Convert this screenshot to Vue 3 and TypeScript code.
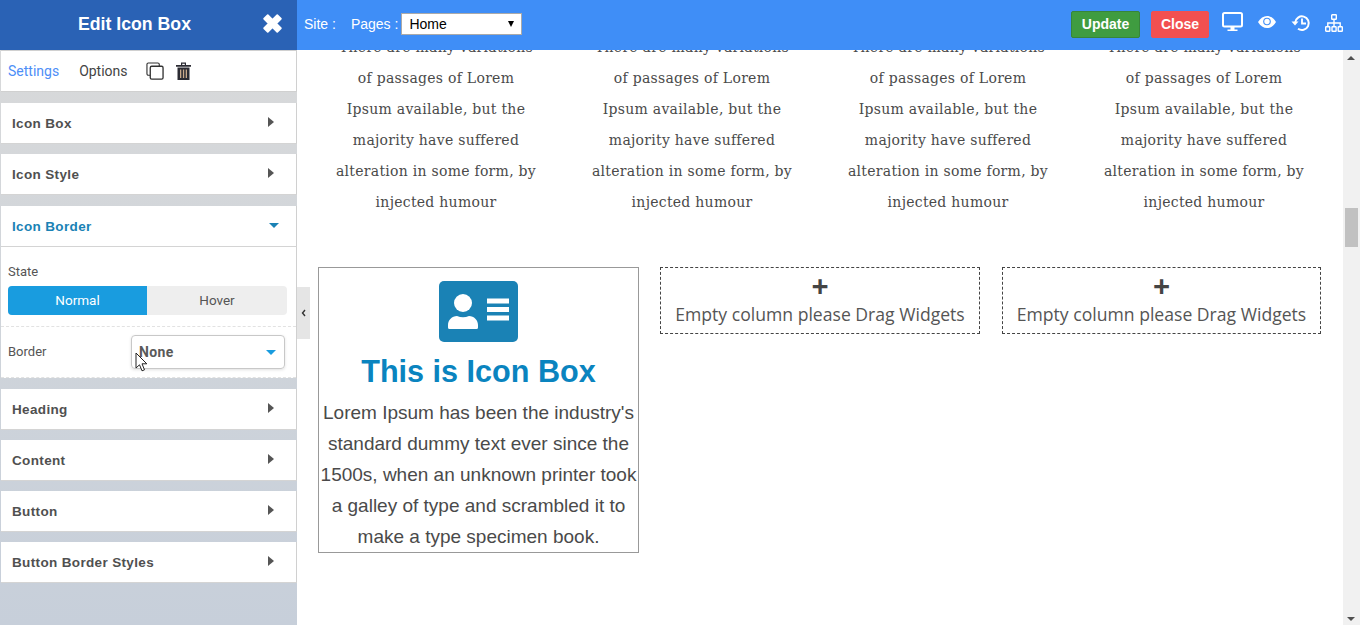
<script setup lang="ts">
const loremLines = [
  'There are many variations',
  'of passages of Lorem',
  'Ipsum available, but the',
  'majority have suffered',
  'alteration in some form, by',
  'injected humour'
]
const textColumns = [1, 2, 3, 4]
const boxLines = [
  "Lorem Ipsum has been the industry's",
  'standard dummy text ever since the',
  '1500s, when an unknown printer took',
  'a galley of type and scrambled it to',
  'make a type specimen book.'
]
const topRows = ['Icon Box', 'Icon Style']
const bottomRows = ['Heading', 'Content', 'Button', 'Button Border Styles']
</script>

<template>
  <div class="page">
    <header class="topbar">
      <div class="edit-title">
        <span class="edit-name">Edit Icon Box</span>
        <svg class="edit-close" width="19" height="19" viewBox="2 2 16 16">
          <path d="M3 6 6 3l4 4 4-4 3 3-4 4 4 4-3 3-4-4-4 4-3-3 4-4z" fill="#fff" stroke="#fff" stroke-width="1.5" stroke-linejoin="round" />
        </svg>
      </div>
      <div class="site-nav">
        <span class="site-label">Site :</span>
        <span class="pages-label">Pages :</span>
        <div class="select-wrap">
          <select class="page-select">
            <option>Home</option>
          </select>
          <span class="select-caret"></span>
        </div>
      </div>
      <div class="actions">
        <button class="btn btn-update">Update</button>
        <button class="btn btn-close">Close</button>
        <svg class="tool tool-monitor" width="21" height="20" viewBox="0 0 21 20">
          <rect x="1" y="1" width="19" height="13.5" rx="1.5" fill="none" stroke="#fff" stroke-width="2" />
          <path d="M8.5 15h4v2.5h-4zM5.5 17.5h10V19h-10z" fill="#fff" />
        </svg>
        <svg class="tool tool-eye" width="18" height="12" viewBox="0 0 18 12">
          <path d="M0 6C2.5 2 5.5 0 9 0s6.500 2 9 6c-2.500 4-5.500 6-9 6S2.500 10 0 6z" fill="#fff" />
          <circle cx="9" cy="5.500" r="3.800" fill="#3f8ef7" />
          <circle cx="9" cy="5.500" r="2.700" fill="#fff" />
        </svg>
        <svg class="tool tool-history" width="20" height="18" viewBox="0 0 20 18">
          <path d="M4.200 8.500A6.800 6.800 0 1 1 7 14.700" fill="none" stroke="#fff" stroke-width="2" />
          <path d="M0.500 7.500h7l-3.500 4z" fill="#fff" />
          <path d="M11 4.500v5h4" fill="none" stroke="#fff" stroke-width="1.800" />
        </svg>
        <svg class="tool tool-sitemap" width="18" height="18" viewBox="0 0 18 18">
          <g fill="none" stroke="#fff" stroke-width="1.400">
            <rect x="6.700" y="0.700" width="4.600" height="4.600" rx="0.600" />
            <rect x="0.700" y="12.700" width="4.100" height="4.600" rx="0.600" />
            <rect x="7" y="12.700" width="4.100" height="4.600" rx="0.600" />
            <rect x="13.200" y="12.700" width="4.100" height="4.600" rx="0.600" />
            <path d="M9 5.500v7M2.800 12.500V9h12.400v3.500" />
          </g>
        </svg>
      </div>
    </header>

    <div class="workspace">
      <aside class="sidebar">
        <div class="tabs">
          <span class="tab tab-active">Settings</span>
          <span class="tab">Options</span>
          <svg class="copy-icon" width="18" height="18" viewBox="0 0 19 19">
            <path d="M4.500 14H2.500A1.500 1.500 0 0 1 1 12.500v-10A1.500 1.500 0 0 1 2.500 1h10A1.500 1.500 0 0 1 14 2.500v2" fill="none" stroke="#333" stroke-width="1.200" />
            <rect x="4.500" y="4.500" width="13.500" height="13.500" rx="1.500" fill="#fff" stroke="#333" stroke-width="1.400" />
          </svg>
          <svg class="trash-icon" width="15" height="18" viewBox="0 0 15 18">
            <path d="M0 3h15v1.800H0zM5 0.500h5V3H8.800V1.700H6.200V3H5z" fill="#2b2b33" />
            <path d="M1.500 5.500h12V18h-12z" fill="#2b2b33" />
            <path d="M4 7.500h1.300V16H4zM6.900 7.500h1.300V16H6.900zM9.700 7.500H11V16H9.700z" fill="#c9a98a" />
          </svg>
        </div>

        <div v-for="(row, i) in topRows" :key="row" class="row" :class="{ 'row-wide': i === 1 }">
          <span class="row-title">{{ row }}</span>
          <span class="arrow-right"></span>
        </div>

        <div class="row row-open">
          <span class="row-title">Icon Border</span>
          <span class="arrow-down"></span>
        </div>
        <div class="row-body">
          <div class="state-block">
            <div class="field-label">State</div>
            <div class="switch">
              <span class="switch-item switch-on">Normal</span>
              <span class="switch-item">Hover</span>
            </div>
          </div>
          <div class="border-block">
            <span class="field-label">Border</span>
            <div class="border-select">
              <span>None</span>
              <span class="select-arrow"></span>
              <svg class="cursor" width="15" height="21" viewBox="0 0 15 21">
                <path d="M1 1v15l3.500-3.200 2.500 6 2.500-1-2.500-6h4.800z" fill="#fff" stroke="#222" stroke-width="1" />
              </svg>
            </div>
          </div>
        </div>

        <div v-for="row in bottomRows" :key="row" class="row">
          <span class="row-title">{{ row }}</span>
          <span class="arrow-right"></span>
        </div>
      </aside>

      <div class="collapse-tab">
        <svg width="5" height="8" viewBox="0 0 5 8">
          <path d="M4 1 1.500 4 4 7" fill="none" stroke="#333" stroke-width="1.400" />
        </svg>
      </div>

      <main class="canvas">
        <section class="text-grid">
          <div v-for="col in textColumns" :key="col" class="text-col">
            <p v-for="line in loremLines" :key="line">{{ line }}</p>
          </div>
        </section>
        <section class="widget-grid">
          <div class="icon-box">
            <svg class="id-icon" width="79" height="61" viewBox="0 0 79 61">
              <rect width="79" height="61" rx="5" fill="#1a82b5" />
              <circle cx="24" cy="22" r="9" fill="#fff" />
              <path d="M9 46.500V44c0-5 4-9 9-9 2 .8 4 1.200 6 1.200s4-.4 6-1.200c5 0 9 4 9 9v2.500a1.500 1.500 0 0 1-1.500 1.500h-27A1.500 1.500 0 0 1 9 46.500z" fill="#fff" />
              <path d="M48 17.500h22v5H48zM48 26h22v5H48zM48 34.500h22v5H48z" fill="#fff" />
            </svg>
            <h2 class="box-heading">This is Icon Box</h2>
            <div class="box-text">
              <p v-for="line in boxLines" :key="line">{{ line }}</p>
            </div>
          </div>
          <div class="empty-col">
            <span class="plus">+</span>
            <span class="empty-text">Empty column please Drag Widgets</span>
          </div>
          <div class="empty-col empty-last">
            <span class="plus">+</span>
            <span class="empty-text">Empty column please Drag Widgets</span>
          </div>
        </section>
      </main>

      <div class="scrollbar">
        <span class="scroll-up"></span>
        <span class="scroll-thumb"></span>
        <span class="scroll-down"></span>
      </div>
    </div>
  </div>
</template>

<style scoped>
.page {
  width: 1360px;
  height: 625px;
  display: flex;
  flex-direction: column;
  overflow: hidden;
  font-family: Roboto, "Liberation Sans", sans-serif;
  background: #fff;
}

.topbar {
  height: 50px;
  flex: none;
  display: flex;
  align-items: center;
  background: #3f8ef7;
  color: #fff;
  position: relative;
  z-index: 2;
}

.edit-title {
  width: 297px;
  height: 50px;
  flex: none;
  box-sizing: border-box;
  padding-bottom: 2px;
  display: flex;
  align-items: center;
  background: #2a62b5;
}

.edit-name {
  width: 269px;
  text-align: center;
  font-family: "Liberation Sans", sans-serif;
  font-size: 17.7px;
  font-weight: 700;
}

.edit-close {
  margin-left: -6px;
  margin-top: -1px;
}

.site-nav {
  display: flex;
  align-items: center;
  padding-left: 7px;
  padding-bottom: 2px;
  font-family: "Liberation Sans", sans-serif;
  font-size: 14px;
}

.pages-label {
  margin-left: 15px;
  margin-right: 3px;
}

.select-wrap {
  position: relative;
  display: flex;
}

.page-select {
  width: 121px;
  height: 22px;
  appearance: none;
  font-family: "Liberation Sans", sans-serif;
  font-size: 14px;
  padding-left: 7px;
  color: #000;
  background: #fff;
  border: 1px solid #aaa;
  border-radius: 0;
}

.select-caret {
  position: absolute;
  right: 8px;
  top: 8px;
  width: 0;
  height: 0;
  border-left: 3px solid transparent;
  border-right: 3px solid transparent;
  border-top: 6px solid #000;
}

.actions {
  margin-left: auto;
  display: flex;
  align-items: center;
  padding-right: 17px;
  padding-bottom: 2px;
}

.btn {
  height: 27px;
  padding: 0;
  border-radius: 2px;
  color: #fff;
  font-family: "Liberation Sans", sans-serif;
  font-size: 14px;
  font-weight: 700;
}

.btn-update {
  width: 69px;
  background: #3f9c40;
  border: 1px solid #37853a;
}

.btn-close {
  width: 58px;
  margin-left: 11px;
  background: #f25050;
  border: 1px solid #f25050;
}

.tool {
  flex: none;
}

.tool-monitor {
  margin-left: 13px;
  margin-top: -4px;
}

.tool-eye {
  margin-left: 15px;
  margin-top: -4px;
}

.tool-history {
  margin-left: 15px;
  margin-top: -3px;
}

.tool-sitemap {
  margin-left: 14px;
  margin-top: -3px;
}

.workspace {
  flex: 1;
  min-height: 0;
  display: flex;
  position: relative;
}

.sidebar {
  width: 297px;
  flex: none;
  box-sizing: border-box;
  padding-left: 1px;
  background: linear-gradient(180deg, #d8d9da 0%, #cfd4da 50%, #c7cfda 100%);
}

.tabs {
  height: 42px;
  box-sizing: border-box;
  display: flex;
  align-items: center;
  padding: 0 0 0 7px;
  margin-bottom: 11px;
  background: #fff;
  border-top: 1px solid #d0d0d0;
  border-bottom: 1px solid #d0d0d0;
  border-right: 1px solid #d0d0d0;
  font-size: 14px;
  color: #444;
}

.tab-active {
  color: #4d8ef7;
  margin-right: 20px;
}

.copy-icon {
  margin-left: 18px;
}

.trash-icon {
  margin-left: 12px;
}

.row {
  height: 41px;
  box-sizing: border-box;
  display: flex;
  align-items: center;
  justify-content: space-between;
  padding: 0 22px 0 11px;
  margin-bottom: 10px;
  background: #fff;
  border-bottom: 1px solid #d4d4d4;
  border-right: 1px solid #d0d0d0;
}

.row-wide {
  margin-bottom: 11px;
}

.row-title {
  font-family: "Liberation Sans", sans-serif;
  font-size: 13.500px;
  font-weight: 700;
  letter-spacing: 0.35px;
  color: #505050;
}

.arrow-right {
  width: 0;
  height: 0;
  margin-top: -2px;
  border-top: 5px solid transparent;
  border-bottom: 5px solid transparent;
  border-left: 6px solid #555;
}

.arrow-down {
  width: 0;
  height: 0;
  margin-right: -5px;
  margin-top: -1px;
  border-left: 5px solid transparent;
  border-right: 5px solid transparent;
  border-top: 5px solid #1a82b5;
}

.row-open {
  margin-bottom: 0;
}

.row-open .row-title {
  color: #1a82b5;
}

.row-body {
  margin-bottom: 11px;
  background: #fff;
  border-right: 1px solid #d0d0d0;
  font-size: 13px;
  color: #555;
}

.state-block {
  height: 80px;
  box-sizing: border-box;
  padding: 18px 9px 0 7px;
  border-bottom: 1px dashed #e2e2e2;
}

.field-label {
  font-size: 13px;
  line-height: 14px;
}

.switch {
  display: flex;
  height: 29px;
  margin-top: 7px;
  border-radius: 4px;
  overflow: hidden;
  background: #eee;
}

.switch-item {
  flex: 1;
  display: flex;
  align-items: center;
  justify-content: center;
  padding-bottom: 1px;
  font-size: 13.500px;
}

.switch-on {
  flex: none;
  width: 139px;
  background: #199cdf;
  color: #fff;
}

.border-block {
  height: 51px;
  box-sizing: border-box;
  display: flex;
  align-items: center;
  justify-content: space-between;
  padding: 0 11px 0 7px;
  border-bottom: 1px dashed #e2e2e2;
}

.border-select {
  width: 154px;
  height: 34px;
  box-sizing: border-box;
  display: flex;
  align-items: center;
  justify-content: space-between;
  padding: 0 8px 0 7px;
  position: relative;
  border: 1px solid #c8c8c8;
  border-radius: 4px;
  box-shadow: 0 1px 3px rgba(0, 0, 0, 0.12);
  font-size: 14px;
  font-weight: 700;
  letter-spacing: 0.4px;
  color: #5a5a5a;
}

.select-arrow {
  width: 0;
  height: 0;
  border-left: 5px solid transparent;
  border-right: 5px solid transparent;
  border-top: 5px solid #199cdf;
}

.cursor {
  position: absolute;
  left: 3px;
  top: 16px;
}

.collapse-tab {
  position: absolute;
  left: 297px;
  top: 237px;
  width: 13px;
  height: 52px;
  display: flex;
  align-items: center;
  justify-content: center;
  background: #e5e5e5;
}

.canvas {
  flex: 1;
  min-width: 0;
  overflow: hidden;
  padding-left: 11px;
}

.text-grid {
  display: grid;
  grid-template-columns: repeat(4, 256px);
  margin-top: -18px;
}

.text-col {
  text-align: center;
  font-family: "DejaVu Serif", serif;
  font-size: 14px;
  letter-spacing: 0.27px;
  line-height: 31px;
  color: #4a4a4a;
}

.text-col p,
.box-text p {
  margin: 0;
  white-space: nowrap;
}

.widget-grid {
  display: grid;
  grid-template-columns: 321px 320px 320px;
  column-gap: 21px;
  align-items: start;
  margin: 49px 0 0 10px;
}

.icon-box {
  height: 286px;
  box-sizing: border-box;
  padding-top: 13px;
  display: flex;
  flex-direction: column;
  align-items: center;
  border: 1px solid #999;
}

.id-icon {
  flex: none;
}

.box-heading {
  margin: 10px 0 0;
  font-family: "Liberation Sans", sans-serif;
  font-size: 30.600px;
  line-height: 38px;
  font-weight: 700;
  color: #0a84bf;
}

.box-text {
  margin-top: 7px;
  text-align: center;
  font-family: "Liberation Sans", sans-serif;
  font-size: 19px;
  line-height: 31px;
  color: #4a4a4a;
}

.empty-col {
  height: 67px;
  box-sizing: border-box;
  display: flex;
  flex-direction: column;
  align-items: center;
  border: 1px dashed #444;
  color: #555;
  font-family: "Open Sans", sans-serif;
}

.empty-last {
  margin-left: 1px;
}

.plus {
  height: 31px;
  font-size: 30px;
  line-height: 36px;
  font-weight: 700;
  color: #444;
}

.empty-text {
  font-size: 17.600px;
  line-height: 30px;
}

.scrollbar {
  width: 17px;
  flex: none;
  position: relative;
  background: #f1f1f1;
}

.scroll-up,
.scroll-down {
  position: absolute;
  left: 4px;
  width: 0;
  height: 0;
  border-left: 4px solid transparent;
  border-right: 4px solid transparent;
}

.scroll-up {
  top: 6px;
  border-bottom: 4px solid #505050;
}

.scroll-down {
  bottom: 4px;
  border-top: 4px solid #505050;
}

.scroll-thumb {
  position: absolute;
  left: 2px;
  top: 158px;
  width: 13px;
  height: 39px;
  background: #c1c1c1;
}
</style>
